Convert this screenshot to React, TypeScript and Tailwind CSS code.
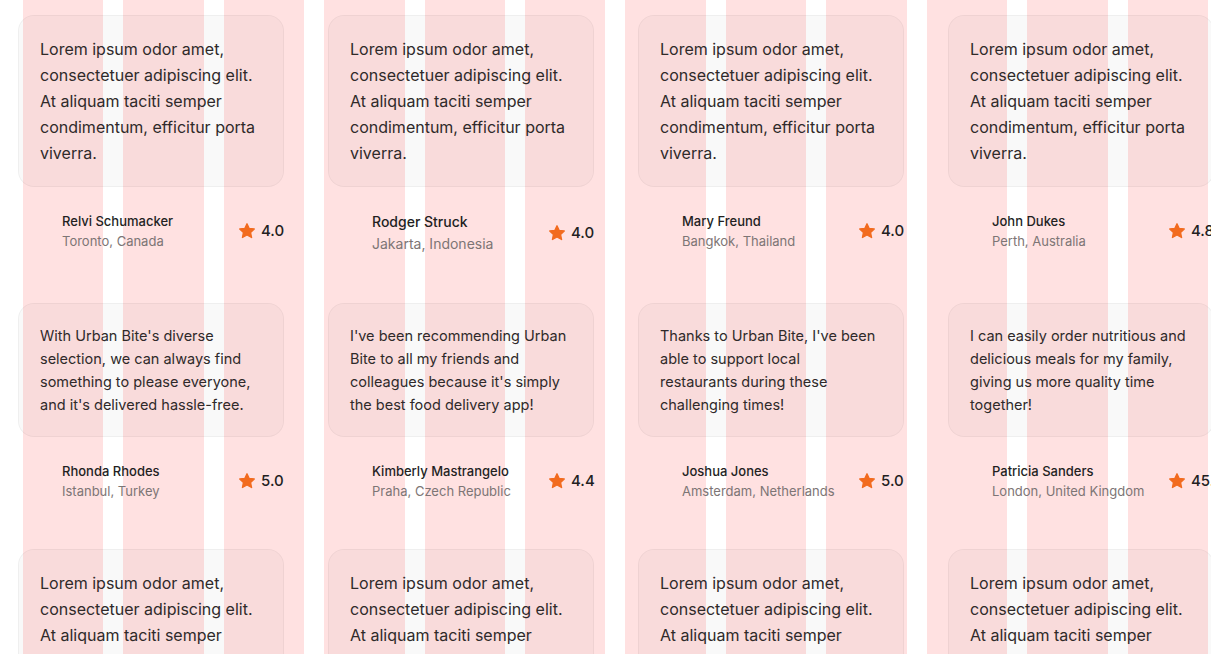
import type { ReactNode } from 'react';

type Review = {
  text: string;
  name: string;
  place: string;
  rating: string;
  big?: boolean;
  large?: boolean;
};

const LOREM =
  'Lorem ipsum odor amet, consectetuer adipiscing elit. At aliquam taciti semper condimentum, efficitur porta viverra.';

const rows: Review[][] = [
  [
    { text: LOREM, large: true, name: 'Relvi Schumacker', place: 'Toronto, Canada', rating: '4.0' },
    { text: LOREM, large: true, big: true, name: 'Rodger Struck', place: 'Jakarta, Indonesia', rating: '4.0' },
    { text: LOREM, large: true, name: 'Mary Freund', place: 'Bangkok, Thailand', rating: '4.0' },
    { text: LOREM, large: true, name: 'John Dukes', place: 'Perth, Australia', rating: '4.8' },
  ],
  [
    {
      text: "With Urban Bite's diverse selection, we can always find something to please everyone, and it's delivered hassle-free.",
      name: 'Rhonda Rhodes',
      place: 'Istanbul, Turkey',
      rating: '5.0',
    },
    {
      text: "I've been recommending Urban Bite to all my friends and colleagues because it's simply the best food delivery app!",
      name: 'Kimberly Mastrangelo',
      place: 'Praha, Czech Republic',
      rating: '4.4',
    },
    {
      text: "Thanks to Urban Bite, I've been able to support local restaurants during these challenging times!",
      name: 'Joshua Jones',
      place: 'Amsterdam, Netherlands',
      rating: '5.0',
    },
    {
      text: 'I can easily order nutritious and delicious meals for my family, giving us more quality time together!',
      name: 'Patricia Sanders',
      place: 'London, United Kingdom',
      rating: '45.0',
    },
  ],
  [
    { text: LOREM, large: true, name: 'Relvi Schumacker', place: 'Toronto, Canada', rating: '4.0' },
    { text: LOREM, large: true, name: 'Rodger Struck', place: 'Jakarta, Indonesia', rating: '4.0' },
    { text: LOREM, large: true, name: 'Mary Freund', place: 'Bangkok, Thailand', rating: '4.0' },
    { text: LOREM, large: true, name: 'John Dukes', place: 'Perth, Australia', rating: '4.8' },
  ],
];

function StarIcon() {
  return (
    <svg width="18" height="18" viewBox="0 0 24 24" className="shrink-0 text-[#f26b1f]">
      <path
        d="M12 2.4l2.95 6.2 6.75.75-5 4.6 1.4 6.75L12 17.3l-6.1 3.4 1.4-6.75-5-4.6 6.75-.75z"
        fill="currentColor"
        stroke="currentColor"
        strokeWidth="1.8"
        strokeLinejoin="round"
      />
    </svg>
  );
}

function Card({ children, large }: { children: ReactNode; large?: boolean }) {
  return (
    <div className="rounded-2xl border border-black/[0.045] bg-black/[0.025] py-5 pl-[21px] pr-[25px]">
      <p
        className={
          large
            ? 'text-[16px] leading-[26px] text-[#2f2a2a]'
            : 'text-[14.5px] leading-[23px] text-[#2f2a2a]'
        }
      >
        {children}
      </p>
    </div>
  );
}

function ReviewItem({ review }: { review: Review }) {
  return (
    <div className="flex flex-col">
      <Card large={review.large}>{review.text}</Card>
      <div className="mt-6 flex items-center justify-between pl-11">
        <div className="flex flex-col">
          <span
            className={
              review.big
                ? 'text-[14px] leading-[22px] font-medium text-[#231f1f]'
                : 'text-[13px] leading-[20px] font-medium text-[#231f1f]'
            }
          >
            {review.name}
          </span>
          <span
            className={
              review.big
                ? 'text-[14px] leading-[22px] text-[#7d7575]'
                : 'text-[13px] leading-[20px] text-[#7d7575]'
            }
          >
            {review.place}
          </span>
        </div>
        {/* fixed-width rating slot, long values spill past the card edge */}
        <div className="flex w-[46px] shrink-0 items-center gap-[5px] whitespace-nowrap">
          <StarIcon />
          <span className="text-[15px] font-medium text-[#231f1f]">{review.rating}</span>
        </div>
      </div>
    </div>
  );
}

export default function App() {
  return (
    <div
      className="relative h-[654px] w-full overflow-hidden bg-white"
      style={{ fontFamily: 'Inter, "Noto Sans", sans-serif' }}
    >
      {/* layout grid overlay */}
      <div className="pointer-events-none absolute inset-0 grid grid-cols-12 gap-5 pl-[23px] pr-[3px]">
        {Array.from({ length: 12 }).map((_, i) => (
          <div key={i} className="h-full bg-[#ffe1e1]" />
        ))}
      </div>

      <div className="relative grid w-[1240px] grid-cols-[repeat(4,266px)] gap-x-11 gap-y-12 pl-[18px] pt-[15px]">
        {rows.flat().map((review, i) => (
          <ReviewItem key={i} review={review} />
        ))}
      </div>
    </div>
  );
}
